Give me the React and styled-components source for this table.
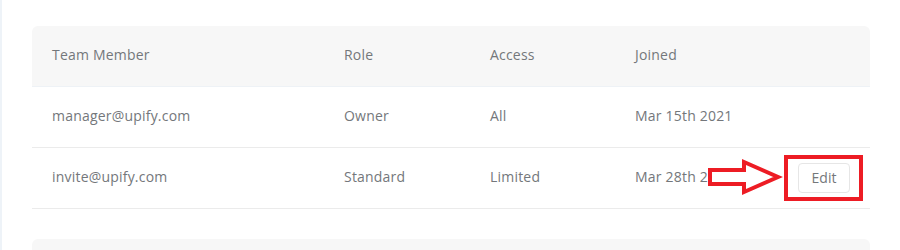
import React from "react";
import styled, { createGlobalStyle } from "styled-components";

const GlobalStyle = createGlobalStyle`
  html, body {
    margin: 0;
    padding: 0;
    background: #ffffff;
  }
  body {
    font-family: "Open Sans", "Noto Sans", sans-serif;
    -webkit-font-smoothing: antialiased;
  }
`;

const Page = styled.div`
  width: 900px;
  height: 250px;
  box-sizing: border-box;
  border-left: 2px solid #eef3f8;
  padding: 26px 30px 0 30px;
  overflow: hidden;
`;

const Table = styled.div`
  display: grid;
  grid-template-columns: 292px 146px 145px 1fr auto;
  width: 838px;
`;

const Row = styled.div`
  display: contents;
`;

const Cell = styled.div`
  height: 61px;
  box-sizing: border-box;
  display: flex;
  align-items: center;
  padding: 0 20px 3px 20px;
  font-size: 14px;
  letter-spacing: 0.2px;
  color: #74777b;
  background: ${(p) => (p.$head ? "#f7f7f7" : "#ffffff")};
  border-bottom: 1px solid ${(p) => (p.$head ? "#eef2f6" : "#ebebeb")};
  justify-content: ${(p) => (p.$end ? "flex-end" : "flex-start")};
  border-top-left-radius: ${(p) => (p.$first && p.$head ? "6px" : "0")};
  border-top-right-radius: ${(p) => (p.$last && p.$head ? "6px" : "0")};
  white-space: nowrap;
`;

const ActionCell = styled(Cell)`
  padding-bottom: 1px;
`;

const ActionWrap = styled.div`
  position: relative;
  display: flex;
  align-items: center;
`;

const EditButton = styled.button`
  width: 52px;
  height: 30px;
  box-sizing: border-box;
  border: 1px solid #e6e6e6;
  border-radius: 4px;
  background: #ffffff;
  font-family: inherit;
  font-size: 14px;
  color: #74777b;
  padding: 0 0 1px 0;
  cursor: pointer;
`;

/* callout frame drawn around the Edit action */
const Highlight = styled.div`
  position: absolute;
  left: -14px;
  right: -13px;
  top: -8px;
  bottom: -8px;
  border: 4.5px solid #ed1c24;
  pointer-events: none;
`;

const Pointer = styled.svg`
  position: absolute;
  left: -90px;
  top: -3px;
  width: 76px;
  height: 36px;
  overflow: visible;
  pointer-events: none;
`;

const NextSection = styled.div`
  margin-top: 30px;
  width: 838px;
  height: 40px;
  background: #f7f7f7;
  border-radius: 6px 6px 0 0;
`;

const members = [
  { email: "manager@upify.com", role: "Owner", access: "All", joined: "Mar 15th 2021", editable: false },
  { email: "invite@upify.com", role: "Standard", access: "Limited", joined: "Mar 28th 2021", editable: true },
];

export default function App() {
  return (
    <>
      <GlobalStyle />
      <Page>
        <Table>
          <Row>
            <Cell $head $first>Team Member</Cell>
            <Cell $head>Role</Cell>
            <Cell $head>Access</Cell>
            <Cell $head>Joined</Cell>
            <Cell $head $last />
          </Row>
          {members.map((m) => (
            <Row key={m.email}>
              <Cell>{m.email}</Cell>
              <Cell>{m.role}</Cell>
              <Cell>{m.access}</Cell>
              <Cell>{m.joined}</Cell>
              <ActionCell $end>
                {m.editable && (
                  <ActionWrap>
                    <Pointer viewBox="0 0 76 36">
                      <path
                        d="M2 10 L36 10 L36 2 L70 17 L36 32 L36 24 L2 24 Z"
                        fill="#ffffff"
                        stroke="#ed1c24"
                        strokeWidth="4"
                        strokeLinejoin="miter"
                      />
                    </Pointer>
                    <EditButton>Edit</EditButton>
                    <Highlight />
                  </ActionWrap>
                )}
              </ActionCell>
            </Row>
          ))}
        </Table>
        <NextSection />
      </Page>
    </>
  );
}
